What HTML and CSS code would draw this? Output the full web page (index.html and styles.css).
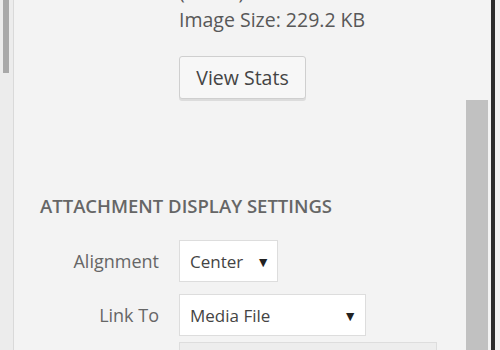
FILE: index.html
```html
<!DOCTYPE html>
<html lang="en">
<head>
    <meta charset="UTF-8">
    <meta name="viewport" content="width=device-width, initial-scale=1.0">
    <title>Attachment Details</title>
    <link rel="stylesheet" href="styles.css">
</head>
<body>
    <div class="frame">
        <div class="side-scroll">
            <div class="side-thumb"></div>
        </div>

        <div class="panel">
            <div class="stats">
                <p class="stat-line">( 5.5% )</p>
                <p class="stat-line">Image Size: 229.2 KB</p>
                <button class="stats-btn">View Stats</button>
            </div>

            <h2 class="section-title">Attachment Display Settings</h2>

            <div class="settings">
                <label class="setting-label">Alignment</label>
                <div class="select select-small">
                    <span>Center</span>
                    <span class="arrow">&#9660;</span>
                </div>

                <label class="setting-label">Link To</label>
                <div class="select select-wide">
                    <span>Media File</span>
                    <span class="arrow">&#9660;</span>
                </div>

                <span></span>
                <div class="url-box"></div>
            </div>
        </div>

        <div class="panel-scroll">
            <div class="panel-thumb"></div>
        </div>
        <div class="edge"></div>
    </div>
</body>
</html>
```

FILE: styles.css
```css
* {
    margin: 0;
    padding: 0;
    box-sizing: border-box;
}

body {
    width: 500px;
    height: 350px;
    overflow: hidden;
    background-color: #f3f3f3;
    font-family: 'Open Sans', sans-serif;
    color: #555;
}

.frame {
    display: flex;
    height: 350px;
}

/* left scrollbar of the media grid */
.side-scroll {
    width: 14px;
    padding-left: 3px;
    padding-right: 4px;
    background-color: #ececec;
    border-right: 1px solid #d9d9d9;
}

.side-thumb {
    height: 73px;
    background-color: #a9a9a9;
}

.panel {
    flex: 1;
    overflow: hidden;
}

.stats {
    margin-top: -22px;
    padding-left: 165px;
}

.stat-line {
    font-size: 19.5px;
    line-height: 28px;
    color: #585858;
}

.stats-btn {
    display: block;
    margin-top: 22px;
    width: 127px;
    height: 43px;
    font-family: 'Open Sans', sans-serif;
    font-size: 19.5px;
    color: #444;
    background-color: #f7f7f7;
    border: 1px solid #cfcfcf;
    border-radius: 3px;
    box-shadow: 0 2px 0 #dcdcdc;
}

.section-title {
    margin-top: 95px;
    padding-left: 26px;
    font-size: 18.5px;
    font-weight: 600;
    text-transform: uppercase;
    color: #666;
    line-height: 24px;
}

.settings {
    display: grid;
    grid-template-columns: 145px auto;
    column-gap: 20px;
    row-gap: 12px;
    margin-top: 22px;
    align-items: center;
}

.setting-label {
    text-align: right;
    font-size: 18px;
    color: #666;
}

.select {
    display: flex;
    align-items: center;
    justify-content: space-between;
    height: 42px;
    padding: 0 8px 0 10px;
    font-size: 17px;
    color: #444;
    background-color: #fff;
    border: 1px solid #ddd;
}

.select-small {
    width: 99px;
    padding-right: 7px;
}

.select-wide {
    width: 187px;
}

.arrow {
    font-size: 14px;
    color: #222;
}

.url-box {
    width: 258px;
    height: 40px;
    margin-top: -6px;
    background-color: #ededed;
    border: 1px solid #ddd;
}

/* right scrollbar of the details panel */
.panel-scroll {
    width: 25px;
    padding-top: 100px;
    padding-right: 3px;
}

.panel-thumb {
    height: 250px;
    background-color: #c1c1c1;
}

.edge {
    width: 4px;
    background-color: #2e2e2e;
    border-right: 5px solid #f3f3f3;
    box-sizing: content-box;
}
```
